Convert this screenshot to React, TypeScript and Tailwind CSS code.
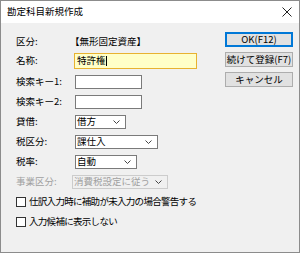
import React from "react";

const FONT = { fontFamily: '"Noto Sans CJK JP", "Noto Sans", sans-serif' };

function Chevron() {
  return (
    <svg width="7" height="4" viewBox="0 0 7 4" className="shrink-0">
      <polyline points="0.5,0.5 3.5,3.5 6.5,0.5" fill="none" stroke="#444" strokeWidth="1" />
    </svg>
  );
}

function Select({ value, width, disabled }: { value: string; width: string; disabled?: boolean }) {
  return (
    <div
      className={`flex h-[14px] items-center justify-between pl-[1px] pr-[5px] border ${width} ${
        disabled ? "border-[#cccccc] bg-[#f0f0f0] text-[#a0a0a0]" : "border-[#7a7a7a] bg-white"
      }`}
    >
      <span className="leading-none">{value}</span>
      <Chevron />
    </div>
  );
}

function Row({ label, children, muted }: { label: string; children?: React.ReactNode; muted?: boolean }) {
  return (
    <div className="flex h-[20px] items-center">
      <span className={`w-[59px] shrink-0 leading-none ${muted ? "text-[#a0a0a0]" : ""}`}>{label}</span>
      {children}
    </div>
  );
}

function Check({ label }: { label: string }) {
  return (
    <div className="flex h-[20px] items-center gap-[3px]">
      <span className="h-[10px] w-[10px] border border-[#333] bg-white" />
      <span className="leading-none tracking-[-0.7px]">{label}</span>
    </div>
  );
}

export default function App() {
  return (
    <div className="flex h-[253px] w-[300px] flex-col border border-[#8c8c8c] text-[9.5px] text-black" style={FONT}>
      <div className="flex h-[22px] items-center justify-between bg-white pl-[6px] pr-[7px]">
        <span className="leading-none">勘定科目新規作成</span>
        <svg width="10" height="10" viewBox="0 0 10 10">
          <path d="M0.5 0.5 L9.5 9.5 M9.5 0.5 L0.5 9.5" stroke="#222" strokeWidth="1" />
        </svg>
      </div>
      <div className="flex flex-1 bg-[#f0f0f0]">
        <div className="flex flex-1 flex-col pl-[15px] pt-[11px]">
          <div className="flex h-[16px] items-center">
            <span className="w-[54px] shrink-0 leading-none">区分:</span>
            <span className="leading-none">【無形固定資産】</span>
          </div>
          <div className="mt-[2px] flex h-[17px] items-center">
            <span className="w-[58px] shrink-0 leading-none">名称:</span>
            <div className="flex h-[16px] w-[123px] items-center border border-[#e8b230] bg-[#ffffc8] pl-[2px]">
              <span className="leading-none">特許権</span>
              <span className="h-[10px] w-px bg-black" />
            </div>
          </div>
          <div className="mt-[3px]">
            <Row label="検索キー1:">
              <div className="h-[14px] w-[67px] border border-[#7a7a7a] bg-white" />
            </Row>
            <Row label="検索キー2:">
              <div className="h-[14px] w-[67px] border border-[#7a7a7a] bg-white" />
            </Row>
            <Row label="貸借:">
              <Select value="借方" width="w-[51px]" />
            </Row>
            <Row label="税区分:">
              <Select value="課仕入" width="w-[83px]" />
            </Row>
            <Row label="税率:">
              <Select value="自動" width="w-[62px]" />
            </Row>
            <Row label="事業区分:" muted>
              <div className="-ml-[3px]">
                <Select value="消費税設定に従う" width="w-[96px]" disabled />
              </div>
            </Row>
            <Check label="仕訳入力時に補助が未入力の場合警告する" />
            <Check label="入力候補に表示しない" />
          </div>
        </div>
        <div className="flex w-[74px] shrink-0 flex-col gap-[5px] pt-[9px]">
          <button className="h-[15px] w-[68px] border border-[#0078d7] bg-[#e1e1e1] leading-none outline outline-1 -outline-offset-2 outline-[#0078d7]">
            OK(F12)
          </button>
          <button className="h-[15px] w-[68px] border border-[#adadad] bg-[#e1e1e1] leading-none">続けて登録(F7)</button>
          <button className="h-[15px] w-[68px] border border-[#adadad] bg-[#e1e1e1] leading-none">キャンセル</button>
        </div>
      </div>
    </div>
  );
}
